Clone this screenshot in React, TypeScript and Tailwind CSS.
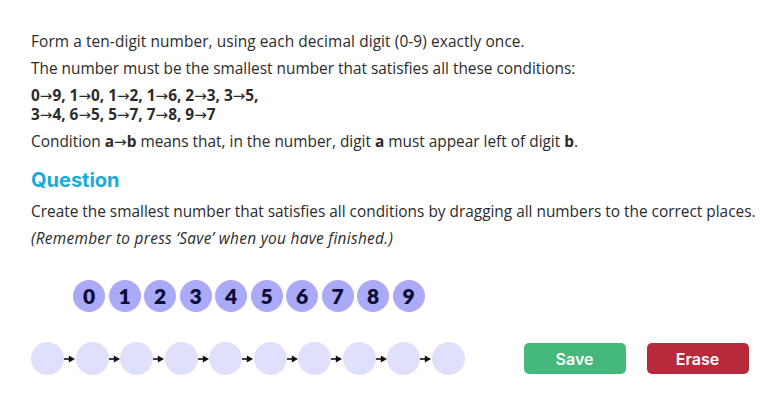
import React from "react";

const digits = [0, 1, 2, 3, 4, 5, 6, 7, 8, 9];

function Arrow() {
  return (
    <svg width="11.5" height="8" viewBox="0 0 11.5 8" className="shrink-0">
      <line x1="0" y1="4" x2="6.5" y2="4" stroke="#111" strokeWidth="1.6" />
      <polygon points="4.8,0.6 11,4 4.8,7.4" fill="#111" />
    </svg>
  );
}

function Ar() {
  return (
    <span
      className="text-[15px] leading-[10px] font-normal"
      style={{ fontFamily: '"DejaVu Sans", sans-serif' }}
    >
      →
    </span>
  );
}

export default function App() {
  return (
    <div
      className="w-[782px] h-[415px] bg-white text-[#2b2b2b] pl-[31px] pt-[32px]"
      style={{ fontFamily: '"Open Sans", "Noto Sans", sans-serif' }}
    >
      <p className="text-[15.4px] leading-[20px] tracking-[0.1px]">
        Form a ten-digit number, using each decimal digit (0-9) exactly once.
      </p>
      <p className="text-[15.4px] leading-[20px] mt-[7px]">
        The number must be the smallest number that satisfies all these conditions:
      </p>
      <p className="text-[15.4px] leading-[19px] mt-[7px] font-bold">
        0<Ar />9, 1<Ar />0, 1<Ar />2, 1<Ar />6, 2<Ar />3, 3<Ar />5,
        <br />
        3<Ar />4, 6<Ar />5, 5<Ar />7, 7<Ar />8, 9<Ar />7
      </p>
      <p className="text-[15.4px] leading-[20px] mt-[8px]">
        Condition <b>a<Ar />b</b> means that, in the number, digit <b>a</b> must appear left of digit <b>b</b>.
      </p>
      <h2
        className="text-[20px] leading-[26px] mt-[15px] font-bold text-[#19acd8]"
        style={{ fontFamily: '"Inter", sans-serif' }}
      >
        Question
      </h2>
      <p className="text-[15.4px] leading-[20px] mt-[9px]">
        Create the smallest number that satisfies all conditions by dragging all numbers to the correct places.
      </p>
      <p className="text-[15.4px] leading-[20px] mt-[7px] italic tracking-[0.3px]">
        (Remember to press ‘Save’ when you have finished.)
      </p>
      <div className="flex gap-[3.5px] ml-[42px] mt-[31px]">
        {digits.map((d) => (
          <div
            key={d}
            className="w-[32px] h-[32px] rounded-full bg-[#abaaf9] flex items-center justify-center text-[21px] font-extrabold text-[#0b0b38]"
            style={{ fontFamily: '"Lato", sans-serif' }}
          >
            {d}
          </div>
        ))}
      </div>
      <div className="flex items-center mt-[30px]">
        <div className="flex items-center">
          {digits.map((d, i) => (
            <React.Fragment key={d}>
              {i > 0 && <Arrow />}
              <div className="w-[33px] h-[33px] rounded-full bg-[#e1e0fc]" />
            </React.Fragment>
          ))}
        </div>
        <button
          className="ml-[59px] w-[102px] h-[31px] rounded-[5px] bg-[#45b97c] text-white text-[16px] font-semibold"
          style={{ fontFamily: '"Inter", sans-serif' }}
        >
          Save
        </button>
        <button
          className="ml-[21px] w-[102px] h-[31px] rounded-[5px] bg-[#b8293b] text-white text-[16px] font-semibold"
          style={{ fontFamily: '"Inter", sans-serif' }}
        >
          Erase
        </button>
      </div>
    </div>
  );
}
